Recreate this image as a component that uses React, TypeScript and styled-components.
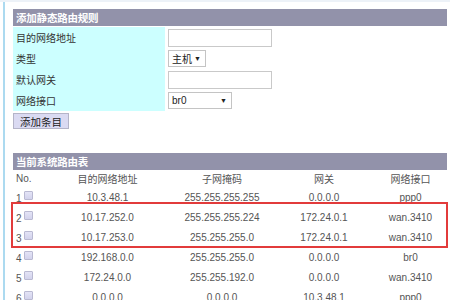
import React from "react";
import styled, { createGlobalStyle } from "styled-components";

const Global = createGlobalStyle`
  html, body { margin: 0; padding: 0; background: #fff; }
  body { font-family: "Liberation Sans", "Noto Sans CJK SC", Arial, sans-serif; }
`;

const Page = styled.div`
  border-top: 2px solid #edf2f8;
  height: 298px;
  overflow: hidden;
`;

const Frame = styled.div`
  margin-left: 3px;
  border-left: 2px solid #acdaf0;
  padding: 7px 0 0 8px;
  height: 100%;
  box-sizing: border-box;
`;

const Section = styled.section<{ $gap?: number }>`
  width: 434px;
  margin-top: ${(p) => p.$gap ?? 0}px;
`;

const Header = styled.div`
  height: 17px;
  line-height: 17px;
  background: #9292aa;
  color: #fff;
  font-family: "Noto Sans CJK SC", sans-serif;
  font-weight: 700;
  font-size: 10.5px;
  padding-left: 3px;
  letter-spacing: -0.2px;
`;

const FormGrid = styled.div`
  display: grid;
  grid-template-columns: 152px 1fr;
  grid-auto-rows: 21px;
  margin-top: 1px;
`;

const Label = styled.div`
  background: #ccffff;
  color: #333;
  font-family: "Noto Sans CJK SC", sans-serif;
  font-size: 10px;
  padding-left: 3px;
  display: flex;
  align-items: center;
`;

const Field = styled.div`
  padding-left: 3px;
  display: flex;
  align-items: center;
`;

const TextInput = styled.div`
  width: 104px;
  height: 18px;
  box-sizing: border-box;
  border: 1px solid #c9c9c9;
  background: #fff;
`;

const Select = styled.div<{ $w: number }>`
  width: ${(p) => p.$w}px;
  height: 17px;
  box-sizing: border-box;
  border: 1px solid #c4c4c4;
  background: #fff;
  display: flex;
  align-items: center;
  justify-content: space-between;
  padding: 0 4px 0 3px;
  font-size: 10px;
  color: #222;
  font-family: "Liberation Sans", "Noto Sans CJK SC", sans-serif;
`;

const Arrow = styled.span`
  font-size: 7px;
  color: #222;
`;

const Button = styled.div`
  margin-top: 2px;
  width: 56px;
  height: 16px;
  box-sizing: border-box;
  border: 1px solid #b4b4c8;
  background: #dadaf2;
  color: #222;
  font-family: "Noto Sans CJK SC", sans-serif;
  font-size: 10.5px;
  display: flex;
  align-items: center;
  justify-content: center;
`;

const cols = "32px 125px 104px 100px 73px";

const HeadRow = styled.div`
  display: grid;
  grid-template-columns: ${cols};
  height: 17px;
  align-items: center;
  color: #555;
  font-size: 10px;
  font-family: "Liberation Sans", "Noto Sans CJK SC", sans-serif;
`;

const Body = styled.div`
  position: relative;
`;

const Row = styled.div`
  display: grid;
  grid-template-columns: ${cols};
  height: 20px;
  align-items: center;
  color: #555;
  font-size: 10px;
  font-family: "Liberation Sans", "Noto Sans CJK SC", sans-serif;
`;

const Cell = styled.div<{ $left?: boolean }>`
  text-align: ${(p) => (p.$left ? "left" : "center")};
  padding-left: ${(p) => (p.$left ? 3 : 0)}px;
  white-space: nowrap;
`;

const NoCell = styled.div`
  display: flex;
  align-items: center;
  padding-left: 3px;
  padding-top: 2px;
`;

const Check = styled.span`
  width: 9px;
  height: 9px;
  box-sizing: border-box;
  border: 1px solid #b9b9d2;
  border-radius: 1px;
  background: linear-gradient(#e4e4f6, #d2d2ec);
  margin: 0 0 5px 2px;
`;

const Highlight = styled.div`
  position: absolute;
  left: -2px;
  top: 15px;
  width: 437px;
  height: 46px;
  box-sizing: border-box;
  border: 2px solid #e23b3b;
  pointer-events: none;
`;

const rows = [
  ["10.3.48.1", "255.255.255.255", "0.0.0.0", "ppp0"],
  ["10.17.252.0", "255.255.255.224", "172.24.0.1", "wan.3410"],
  ["10.17.253.0", "255.255.255.0", "172.24.0.1", "wan.3410"],
  ["192.168.0.0", "255.255.255.0", "0.0.0.0", "br0"],
  ["172.24.0.0", "255.255.192.0", "0.0.0.0", "wan.3410"],
  ["0.0.0.0", "0.0.0.0", "10.3.48.1", "ppp0"],
];

export default function App() {
  return (
    <>
      <Global />
      <Page>
        <Frame>
          <Section>
            <Header>添加静态路由规则</Header>
            <FormGrid>
              <Label>目的网络地址</Label>
              <Field>
                <TextInput />
              </Field>
              <Label>类型</Label>
              <Field>
                <Select $w={38}>
                  主机<Arrow>▼</Arrow>
                </Select>
              </Field>
              <Label>默认网关</Label>
              <Field>
                <TextInput />
              </Field>
              <Label>网络接口</Label>
              <Field>
                <Select $w={64}>
                  br0<Arrow>▼</Arrow>
                </Select>
              </Field>
            </FormGrid>
            <Button>添加条目</Button>
          </Section>
          <Section $gap={24}>
            <Header>当前系统路由表</Header>
            <HeadRow>
              <Cell $left>No.</Cell>
              <Cell>目的网络地址</Cell>
              <Cell>子网掩码</Cell>
              <Cell>网关</Cell>
              <Cell>网络接口</Cell>
            </HeadRow>
            <Body>
              {rows.map((r, i) => (
                <Row key={i}>
                  <NoCell>
                    {i + 1}
                    <Check />
                  </NoCell>
                  {r.map((c, j) => (
                    <Cell key={j}>{c}</Cell>
                  ))}
                </Row>
              ))}
              <Highlight />
            </Body>
          </Section>
        </Frame>
      </Page>
    </>
  );
}
